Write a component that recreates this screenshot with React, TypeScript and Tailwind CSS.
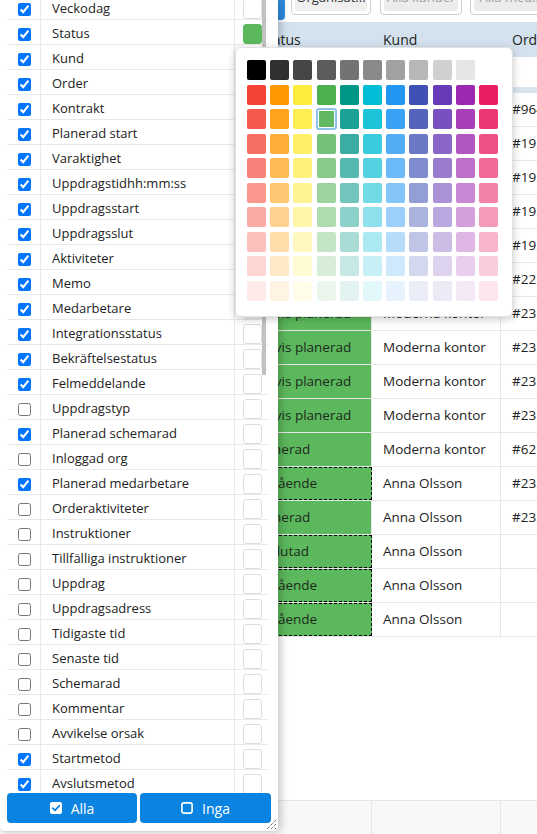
import React from "react";

const items: [string, boolean][] = [
  ["Veckodag", true],
  ["Status", true],
  ["Kund", true],
  ["Order", true],
  ["Kontrakt", true],
  ["Planerad start", true],
  ["Varaktighet", true],
  ["Uppdragstidhh:mm:ss", true],
  ["Uppdragsstart", true],
  ["Uppdragsslut", true],
  ["Aktiviteter", true],
  ["Memo", true],
  ["Medarbetare", true],
  ["Integrationsstatus", true],
  ["Bekräftelsestatus", true],
  ["Felmeddelande", true],
  ["Uppdragstyp", false],
  ["Planerad schemarad", true],
  ["Inloggad org", false],
  ["Planerad medarbetare", true],
  ["Orderaktiviteter", false],
  ["Instruktioner", false],
  ["Tillfälliga instruktioner", false],
  ["Uppdrag", false],
  ["Uppdragsadress", false],
  ["Tidigaste tid", false],
  ["Senaste tid", false],
  ["Schemarad", false],
  ["Kommentar", false],
  ["Avvikelse orsak", false],
  ["Startmetod", true],
  ["Avslutsmetod", true],
];

type Row = { s: string; k: string; o: string; d: boolean };
const rows: Row[] = [
  { s: "Delvis planerad", k: "Moderna kontor", o: "#9641", d: false },
  { s: "Delvis planerad", k: "Moderna kontor", o: "#19230", d: false },
  { s: "Delvis planerad", k: "Moderna kontor", o: "#19231", d: false },
  { s: "Delvis planerad", k: "Moderna kontor", o: "#19232", d: false },
  { s: "Delvis planerad", k: "Moderna kontor", o: "#19233", d: false },
  { s: "Delvis planerad", k: "Moderna kontor", o: "#22310", d: false },
  { s: "Delvis planerad", k: "Moderna kontor", o: "#2351", d: false },
  { s: "Delvis planerad", k: "Moderna kontor", o: "#2352", d: false },
  { s: "Delvis planerad", k: "Moderna kontor", o: "#2353", d: false },
  { s: "Delvis planerad", k: "Moderna kontor", o: "#2354", d: false },
  { s: "Planerad", k: "Moderna kontor", o: "#62", d: false },
  { s: "Pågående", k: "Anna Olsson", o: "#2321", d: true },
  { s: "Planerad", k: "Anna Olsson", o: "#2322", d: false },
  { s: "Avslutad", k: "Anna Olsson", o: "", d: true },
  { s: "Pågående", k: "Anna Olsson", o: "", d: true },
  { s: "Pågående", k: "Anna Olsson", o: "", d: true },
];

const grays = [
  "#000000",
  "#303030",
  "#464646",
  "#5c5c5c",
  "#737373",
  "#8a8a8a",
  "#a1a1a1",
  "#b7b7b7",
  "#d0d0d0",
  "#e6e6e6",
];
const bases = [
  "#F44336",
  "#FF9800",
  "#FFEB3B",
  "#4CAF50",
  "#009688",
  "#00BCD4",
  "#2196F3",
  "#3F51B5",
  "#673AB7",
  "#9C27B0",
  "#E91E63",
];

function mix(hex: string, t: number) {
  const n = parseInt(hex.slice(1), 16);
  const r = (n >> 16) & 255;
  const g = (n >> 8) & 255;
  const b = n & 255;
  const f = (c: number) => Math.round(c + (255 - c) * t);
  return `rgb(${f(r)},${f(g)},${f(b)})`;
}

function CheckIcon() {
  return (
    <svg width="12" height="12" viewBox="0 0 12 12">
      <rect x="0" y="0" width="12" height="12" rx="2" fill="#fff" />
      <path d="M2.8 6.2 L5 8.3 L9.3 3.8" stroke="#0a84e0" strokeWidth="1.8" fill="none" strokeLinecap="round" strokeLinejoin="round" />
    </svg>
  );
}

function SquareIcon() {
  return (
    <svg width="12" height="12" viewBox="0 0 12 12">
      <rect x="0.9" y="0.9" width="10.2" height="10.2" rx="2" fill="none" stroke="#fff" strokeWidth="1.6" />
    </svg>
  );
}

export default function App() {
  return (
    <div className="relative w-[537px] h-[834px] overflow-hidden bg-white font-['Open_Sans',sans-serif] text-[#222]">
      {/* Background grid */}
      <div className="flex flex-col h-full w-[640px]">
        {/* toolbar */}
        <div className="h-[22px] flex items-end overflow-hidden shrink-0">
          <div className="ml-[205px] mb-[2px] w-[80px] h-[40px] rounded-[4px] bg-[#2f8de0] shrink-0" />
          <div className="ml-[6px] mb-[7px] w-[80px] h-[34px] shrink-0 border border-[#cfcfcf] rounded-[4px] bg-white p-[3px]">
            <div className="h-full rounded-[3px] bg-[#efefef] flex items-end justify-center pb-[4px] text-[13px] leading-[20px] text-[#333] whitespace-nowrap">
              Organisat...
            </div>
          </div>
          <div className="ml-[9px] mb-[7px] w-[82px] h-[34px] shrink-0 border border-[#cfcfcf] rounded-[4px] bg-white p-[3px]">
            <div className="h-full rounded-[3px] bg-[#ececec] flex items-end justify-center pb-[4px] text-[13px] leading-[20px] text-[#a0a0a0] whitespace-nowrap">
              Alla kunder
            </div>
          </div>
          <div className="ml-[8px] mb-[7px] w-[82px] h-[34px] shrink-0 border border-[#cfcfcf] rounded-[4px] bg-white p-[3px]">
            <div className="h-full rounded-[3px] bg-[#ececec] flex items-end justify-center pb-[4px] text-[13px] leading-[20px] text-[#a0a0a0] whitespace-nowrap">
              Alla med...
            </div>
          </div>
        </div>
        {/* header */}
        <div className="h-[35px] shrink-0 bg-[#d3e2ee] flex items-center text-[14px]">
          <div className="w-[249px]" />
          <div className="w-[123px] pl-[11px]">Status</div>
          <div className="w-[129px] pl-[11px]">Kund</div>
          <div className="w-[130px] pl-[11px]">Order</div>
        </div>
        {/* filter row */}
        <div className="h-[30px] shrink-0 bg-white" />
        <div className="h-[6px] shrink-0 bg-[#d8e5f0]" />
        {/* rows */}
        {rows.map((r, i) => (
          <div key={i} className="h-[34px] shrink-0 flex text-[13.5px] border-b border-[#e6e6e6]">
            <div className="w-[249px]" />
            <div
              className={
                "w-[123px] pl-[5px] flex items-center bg-[#5cb85c] text-[#1e2a1e] whitespace-nowrap " +
                (r.d ? "border border-dashed border-black" : "border-r border-[#e6e6e6]")
              }
            >
              {r.s}
            </div>
            <div className="w-[129px] pl-[11px] flex items-center border-r border-[#e6e6e6] whitespace-nowrap">{r.k}</div>
            <div className="w-[130px] pl-[11px] flex items-center border-r border-[#e6e6e6] whitespace-nowrap">{r.o}</div>
          </div>
        ))}
        <div className="flex-1" />
        {/* footer */}
        <div className="h-[34px] shrink-0 flex bg-[#f8f8f8] border-t border-[#e6e6e6]">
          <div className="w-[249px]" />
          <div className="w-[123px] border-r border-[#e6e6e6]" />
          <div className="w-[129px] border-r border-[#e6e6e6]" />
          <div className="w-[130px] border-r border-[#e6e6e6]" />
        </div>
      </div>

      {/* Column chooser panel */}
      <div className="absolute left-0 top-0 w-[278px] h-[832px] bg-white rounded-b-[5px] border-b border-[#d8d8d8] shadow-[3px_0_8px_rgba(0,0,0,0.22)] flex flex-col">
        <div className="h-[793px] overflow-hidden shrink-0">
          <div className="-mt-[5px] ml-[7px] w-[261px]">
            {items.map(([label, checked], i) => (
              <div key={label} className="flex h-[25px] border-b border-[#e9e9e9]">
                <div className="w-[34px] h-full border-r border-[#e9e9e9] flex items-center justify-center pt-[4px] pl-[1px]">
                  <input type="checkbox" checked={checked} readOnly className="m-0 w-[13px] h-[13px]" />
                </div>
                <div className="w-[194px] h-full border-r border-[#e9e9e9] flex items-center pl-[11px] pt-[4px] text-[13px] whitespace-nowrap">
                  {label}
                </div>
                <div className="flex-1 h-full flex items-center pl-[8px] pt-[3px]">
                  <div
                    className={
                      "w-[19px] h-[20px] rounded-[3px] border " +
                      (i === 1 ? "bg-[#5cb85c] border-[#5cb85c]" : "bg-white border-[#dedede]")
                    }
                  />
                </div>
              </div>
            ))}
          </div>
        </div>
        <div className="flex gap-[3px] px-[7px] shrink-0">
          <div className="w-[130px] h-[30px] rounded-[4px] bg-[#0a84e0] flex items-center justify-center gap-[9px] text-white text-[14px]">
            <CheckIcon />
            <span>Alla</span>
          </div>
          <div className="w-[131px] h-[30px] rounded-[4px] bg-[#0a84e0] flex items-center justify-center gap-[9px] text-white text-[14px]">
            <SquareIcon />
            <span>Inga</span>
          </div>
        </div>
        {/* scrollbar thumb */}
        <div className="absolute left-[262px] top-0 w-[4px] h-[375px] bg-[#c1c1c1]" />
        {/* resize handle */}
        <svg className="absolute right-[1px] bottom-[1px]" width="12" height="12" viewBox="0 0 12 12">
          <path d="M11 2 L2 11 M11 6 L6 11 M11 10 L10 11" stroke="#333" strokeWidth="1" strokeDasharray="1 1" />
        </svg>
      </div>

      {/* Color picker popup */}
      <div className="absolute left-[235px] top-[47px] w-[278px] h-[270px] bg-white rounded-[6px] border border-[#e2e2e2] shadow-[0_2px_8px_rgba(0,0,0,0.22)] pl-[11px] pt-[12px]">
        <div className="grid grid-cols-[repeat(11,19px)] auto-rows-[20px] gap-x-[4.2px] gap-y-[4.55px]">
          {grays.map((g) => (
            <div key={g} className="rounded-[2px]" style={{ background: g }} />
          ))}
          <div />
          {Array.from({ length: 9 }).map((_, ri) =>
            bases.map((b, ci) => (
              <div
                key={ri + "-" + ci}
                className={
                  "rounded-[2px] " +
                  (ri === 1 && ci === 3
                    ? "outline-2 outline-[#8ec2ec] outline-offset-[-1px] shadow-[inset_0_0_0_2px_#fff]"
                    : "")
                }
                style={{ background: mix(b, ri / 9) }}
              />
            ))
          )}
        </div>
      </div>
    </div>
  );
}
